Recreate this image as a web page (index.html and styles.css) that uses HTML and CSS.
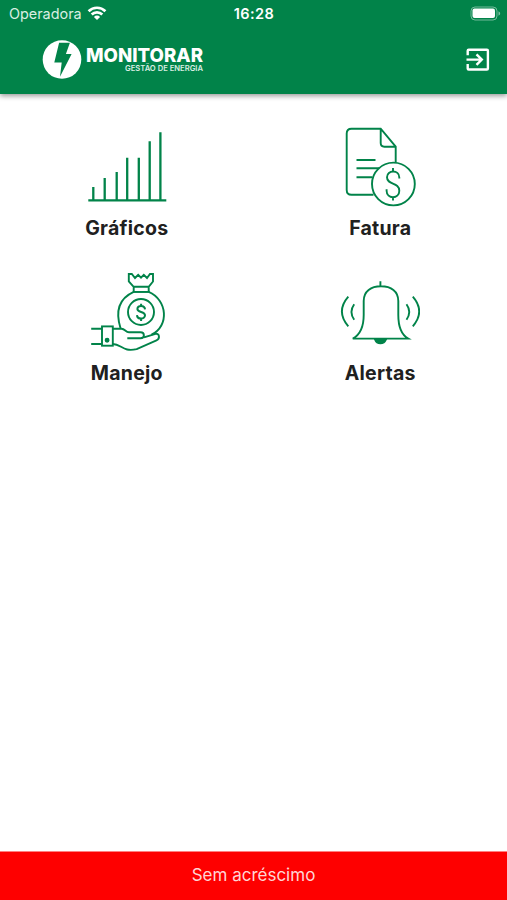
FILE: index.html
```html
<!DOCTYPE html>
<html lang="pt-BR">
<head>
    <meta charset="UTF-8">
    <meta name="viewport" content="width=device-width, initial-scale=1.0">
    <title>Monitorar</title>
    <link rel="stylesheet" href="styles.css">
</head>
<body>
    <header class="header">
        <div class="status-bar">
            <div class="carrier">
                <span>Operadora</span>
                <svg class="wifi" width="20" height="14" viewBox="0 0 20 14">
                    <path d="M1.6 5.2a11.9 11.9 0 0 1 16.8 0M4.7 8.5a7.5 7.5 0 0 1 10.6 0" fill="none" stroke="#fff" stroke-width="2.7"/>
                    <path d="M10 13.9L6.9 10.9a4.4 4.4 0 0 1 6.2 0z" fill="#fff"/>
                </svg>
            </div>
            <div class="clock">16:28</div>
            <svg class="battery" width="31" height="15" viewBox="0 0 31 15">
                <rect x="1" y="1" width="26" height="13" rx="4" fill="none" stroke="#fff" stroke-opacity=".45"/>
                <rect x="2.5" y="2.5" width="22.5" height="9.5" rx="2" fill="#fff"/>
                <path d="M28.5 5.3v4.4q1.7-.7 1.7-2.2t-1.7-2.2z" fill="#fff" fill-opacity=".5"/>
            </svg>
        </div>
        <div class="nav-bar">
            <svg class="logo" width="164" height="40" viewBox="0 0 164 40">
                <circle cx="20" cy="19.5" r="19.3" fill="#fff"/>
                <path d="M17.1 2.7H27.9L23.9 14.1H29.6L18 36.7L19.7 22.5H12.3z" fill="#018349"/>
                <text class="logo-name" x="44" y="22.2" textLength="117" lengthAdjust="spacingAndGlyphs">MONITORAR</text>
                <text class="logo-tagline" x="83" y="31.4" textLength="78" lengthAdjust="spacingAndGlyphs">GESTÃO DE ENERGIA</text>
            </svg>
            <button class="logout-button" aria-label="Sair">
                <svg width="24" height="24" viewBox="0 0 24 24" fill="none" stroke="#fff" stroke-width="2.4">
                    <path d="M1.7 7.2V2.7q0-1 1-1H20.9q1 0 1 1V20.5q0 1-1 1H2.7q-1 0-1-1v-4.5"/>
                    <path d="M.5 11.6H15.5M10.5 6.3l5.3 5.3-5.3 5.3"/>
                </svg>
            </button>
        </div>
    </header>

    <main class="menu">
        <a class="menu-item">
            <svg class="menu-icon" viewBox="0 0 80 80">
                <path d="M1.3 73.3H79.3M6.3 60v13M17.7 51v22M29.7 45v28M40.2 30.7V73M51.8 30.7V73M62.7 14.3V73M73.4 5.3V73" stroke-width="2.3"/>
            </svg>
            <span>Gráficos</span>
        </a>
        <a class="menu-item">
            <svg class="menu-icon" viewBox="0 0 80 80">
                <path d="M33.5 67.7H11.5q-4.8 0-4.8-4.8V6.5q0-4.8 4.8-4.8H40.7L55.7 19.7V35.5M40.7 1.7V16q0 3.7 3.7 3.7H55.7M16.5 33H35.5M16.5 41.3H39.3M16.5 50.3H32.5"/>
                <circle cx="53.4" cy="57" r="21.4"/>
                <path d="M59.3 51.5V50.4C59.3 42.6 47 42.6 47 50.2C47 58.4 59.3 54.8 59.3 63.8C59.3 72.3 46.6 72.3 46.6 63.8V62.3M53 41V44.5M53 70.2V73.5"/>
            </svg>
            <span>Fatura</span>
        </a>
        <a class="menu-item">
            <svg class="menu-icon" viewBox="0 0 80 80">
                <path d="M46.7 14.8L41.8 9.5V2H44.8L48 6L51.2 2.8L54 5.6L56.8 2.8L60 6L63 2H66V9.5L61.7 14.8zM46.7 14.8v5.1h15v-5.1"/>
                <path d="M33.6 56.5C29 42 30 27.5 46.7 19.9H61.7C80.5 28 82.5 54 64.5 62.7"/>
                <circle cx="54" cy="40" r="13"/>
                <path d="M58 37.4C57.8 33 50.4 32.8 50.4 37C50.4 41 58 39 58 43.3C58 47.7 50.2 47.7 50 43.1M54.1 31.7v2.7M54.1 46v3" stroke-width="2"/>
                <rect x="15" y="54.4" width="10.8" height="19.3"/>
                <path d="M4.2 56.7H15M4.2 72H15M25.8 56.7H34.5C38 56.7 38.5 60.3 42 60.3H53.5C58 60.3 58 66.2 53.5 66.2H40.3M57 65.4L68.5 61.8C72.5 60.8 73.3 66.7 69.5 68.3L49.7 77.1C36 80.5 34.5 72 25.8 72"/>
                <circle cx="20.1" cy="68.3" r="1.5" fill="#018349"/>
            </svg>
            <span>Manejo</span>
        </a>
        <a class="menu-item">
            <svg class="menu-icon" viewBox="0 0 80 80">
                <path d="M40.4 9.3V14.3M12.8 66.6C21.5 62 23.7 52 23.7 43V29C23.7 19 31 14.3 41 14.3S58.3 19 58.3 29V43C58.3 52 60 62 68.2 66.6z"/>
                <path d="M35 67.3H46Q44.3 71.3 40.4 71.3T35 67.3z" fill="#018349"/>
                <path d="M8.3 24.7Q-4.5 39.5 8.3 54.3M14.2 32.3Q8.7 40 14.2 47.7M66.5 32.3Q72 40 66.5 47.7M72.8 24.7Q85.6 39.5 72.8 54.3"/>
            </svg>
            <span>Alertas</span>
        </a>
    </main>

    <footer class="footer">Sem acréscimo</footer>
</body>
</html>
```
FILE: styles.css
```css
* {
    box-sizing: border-box;
}
body {
    margin: 0;
    height: 100vh;
    display: flex;
    flex-direction: column;
    background-color: #fff;
    font-family: Inter, "Liberation Sans", sans-serif;
}
.header {
    height: 94px;
    background-color: #018349;
    color: #fff;
    box-shadow: 0 2px 5px rgba(0, 0, 0, 0.4);
}
.status-bar {
    display: grid;
    grid-template-columns: 1fr auto 1fr;
    align-items: center;
    height: 27px;
    padding: 0 6px 0 9px;
}
.carrier {
    display: flex;
    align-items: center;
    gap: 5px;
    font-size: 14.4px;
    color: #d9eee2;
}
.wifi {
    margin-top: -2px;
}
.clock {
    margin-right: 2px;
    font-size: 14.5px;
    font-weight: 600;
    letter-spacing: 0.4px;
}
.battery {
    justify-self: end;
}
.nav-bar {
    display: flex;
    justify-content: space-between;
    align-items: center;
    height: 65px;
    padding: 0 17px 0 42px;
}
.logo-name {
    font-size: 19.3px;
    font-weight: 800;
    fill: #fff;
}
.logo-tagline {
    font-size: 7.8px;
    font-weight: 600;
    fill: #d9eee2;
}
.logout-button {
    display: flex;
    padding: 0;
    border: none;
    background: none;
    cursor: pointer;
}
.menu {
    flex: 1;
    display: grid;
    grid-template-columns: 1fr 1fr;
    grid-auto-rows: 145px;
    padding-top: 33px;
}
.menu-item {
    display: flex;
    flex-direction: column;
    align-items: center;
    gap: 9px;
    font-size: 19.5px;
    font-weight: 650;
    line-height: 24px;
    letter-spacing: 0.25px;
    color: #202020;
}
.menu-icon {
    width: 80px;
    height: 80px;
    fill: none;
    stroke: #018349;
    stroke-width: 1.9;
}
.footer {
    display: flex;
    align-items: center;
    justify-content: center;
    height: 49px;
    padding-bottom: 2px;
    border-top: 1px solid #ff8080;
    background-color: #fe0000;
    color: #ffd5d5;
    font-size: 17px;
}
```
